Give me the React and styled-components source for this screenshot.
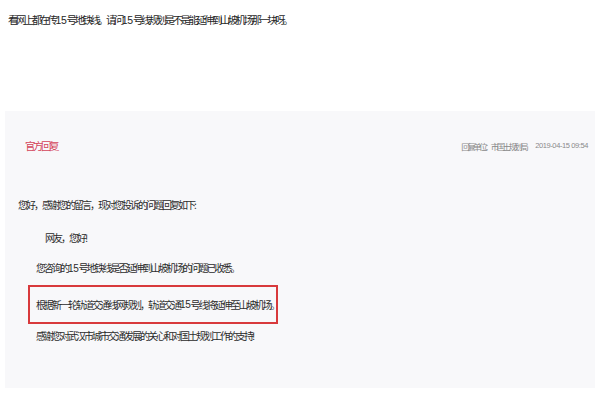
import React from 'react'
import styled, { createGlobalStyle } from 'styled-components'

const GlobalStyle = createGlobalStyle`
  html, body {
    margin: 0;
    padding: 0;
    background: #ffffff;
  }
  body {
    font-family: "Liberation Sans", "Noto Sans CJK SC", sans-serif;
    color: #333333;
  }
`

const App = () => {
  return (
    <Page>
      <GlobalStyle />
      <Question>
        看网上都在传<Num>15</Num>号地铁线。请问<Num>15</Num>号线规划是不是能延伸到山坡机场那一块呀。
      </Question>
      <ReplyPanel>
        <ReplyHeader>
          <ReplyTitle>官方回复</ReplyTitle>
          <ReplyMeta>
            <span>回复单位：市国土规划局</span>
            <DateText>2019-04-15 09:54</DateText>
          </ReplyMeta>
        </ReplyHeader>
        <ReplyBody>
          <Line indent={0} top={43}>
            您好，感谢您的留言，现对您投诉的问题回复如下:
          </Line>
          <Line indent={27} top={17}>
            网友，您好!
          </Line>
          <Line indent={18} top={14}>
            您咨询的<Num>15</Num>号地铁线是否延伸到山坡机场的问题已收悉。
          </Line>
          <Highlight>
            根据新一轮轨道交通线网规划，轨道交通<Num>15</Num>号线将延伸至山坡机场。
          </Highlight>
          <Line indent={18} top={4}>
            感谢您对武汉市城市交通发展的关心和对国土规划工作的支持!
          </Line>
        </ReplyBody>
      </ReplyPanel>
    </Page>
  )
}

const Page = styled.div`
  width: 600px;
  height: 400px;
  box-sizing: border-box;
  padding: 12px 5px 12px 5px;
  display: flex;
  flex-direction: column;
  overflow: hidden;
`
const Num = styled.span`
  letter-spacing: -0.3px;
  font-family: "Liberation Sans", sans-serif;
`
const Question = styled.p`
  margin: 0 0 0 3px;
  font-family: "Noto Sans CJK SC", sans-serif;
  font-size: 10.5px;
  letter-spacing: -2.6px;
  line-height: 16px;
  color: #262626;
  white-space: nowrap;
`
const ReplyPanel = styled.section`
  margin-top: 83px;
  height: 277px;
  box-sizing: border-box;
  background: #f8f8fa;
  padding: 27px 7px 0 13px;
  display: flex;
  flex-direction: column;
`
const ReplyHeader = styled.div`
  display: flex;
  justify-content: space-between;
  align-items: center;
  height: 16px;
  padding-left: 7px;
`
const ReplyTitle = styled.h3`
  margin: 0;
  font-family: "Noto Sans CJK SC", sans-serif;
  font-weight: 400;
  font-size: 10.5px;
  letter-spacing: -2.5px;
  line-height: 16px;
  color: #d4455a;
`
const ReplyMeta = styled.div`
  display: flex;
  align-items: center;
  gap: 9px;
  font-family: "Noto Sans CJK SC", sans-serif;
  font-size: 8.5px;
  letter-spacing: -2.6px;
  line-height: 16px;
  color: #8a8a8a;
  white-space: nowrap;
`
const DateText = styled.span`
  font-family: "Liberation Sans", sans-serif;
  font-size: 7.5px;
  letter-spacing: -0.4px;
`
const ReplyBody = styled.div`
  display: flex;
  flex-direction: column;
  align-items: flex-start;
`
const Line = styled.p`
  margin: ${(p) => p.top}px 0 0 ${(p) => p.indent}px;
  font-family: "Noto Sans CJK SC", sans-serif;
  font-size: 10px;
  letter-spacing: -2px;
  line-height: 16px;
  color: #2b2b2b;
  white-space: nowrap;
`
const Highlight = styled.p`
  margin: 8px 0 0 10px;
  width: 250px;
  height: 39px;
  box-sizing: border-box;
  border: 2px solid #d8393c;
  padding: 0 0 0 6px;
  display: flex;
  align-items: center;
  font-family: "Noto Sans CJK SC", sans-serif;
  font-size: 10px;
  letter-spacing: -2px;
  line-height: 16px;
  color: #2b2b2b;
  white-space: nowrap;
`

export default App
